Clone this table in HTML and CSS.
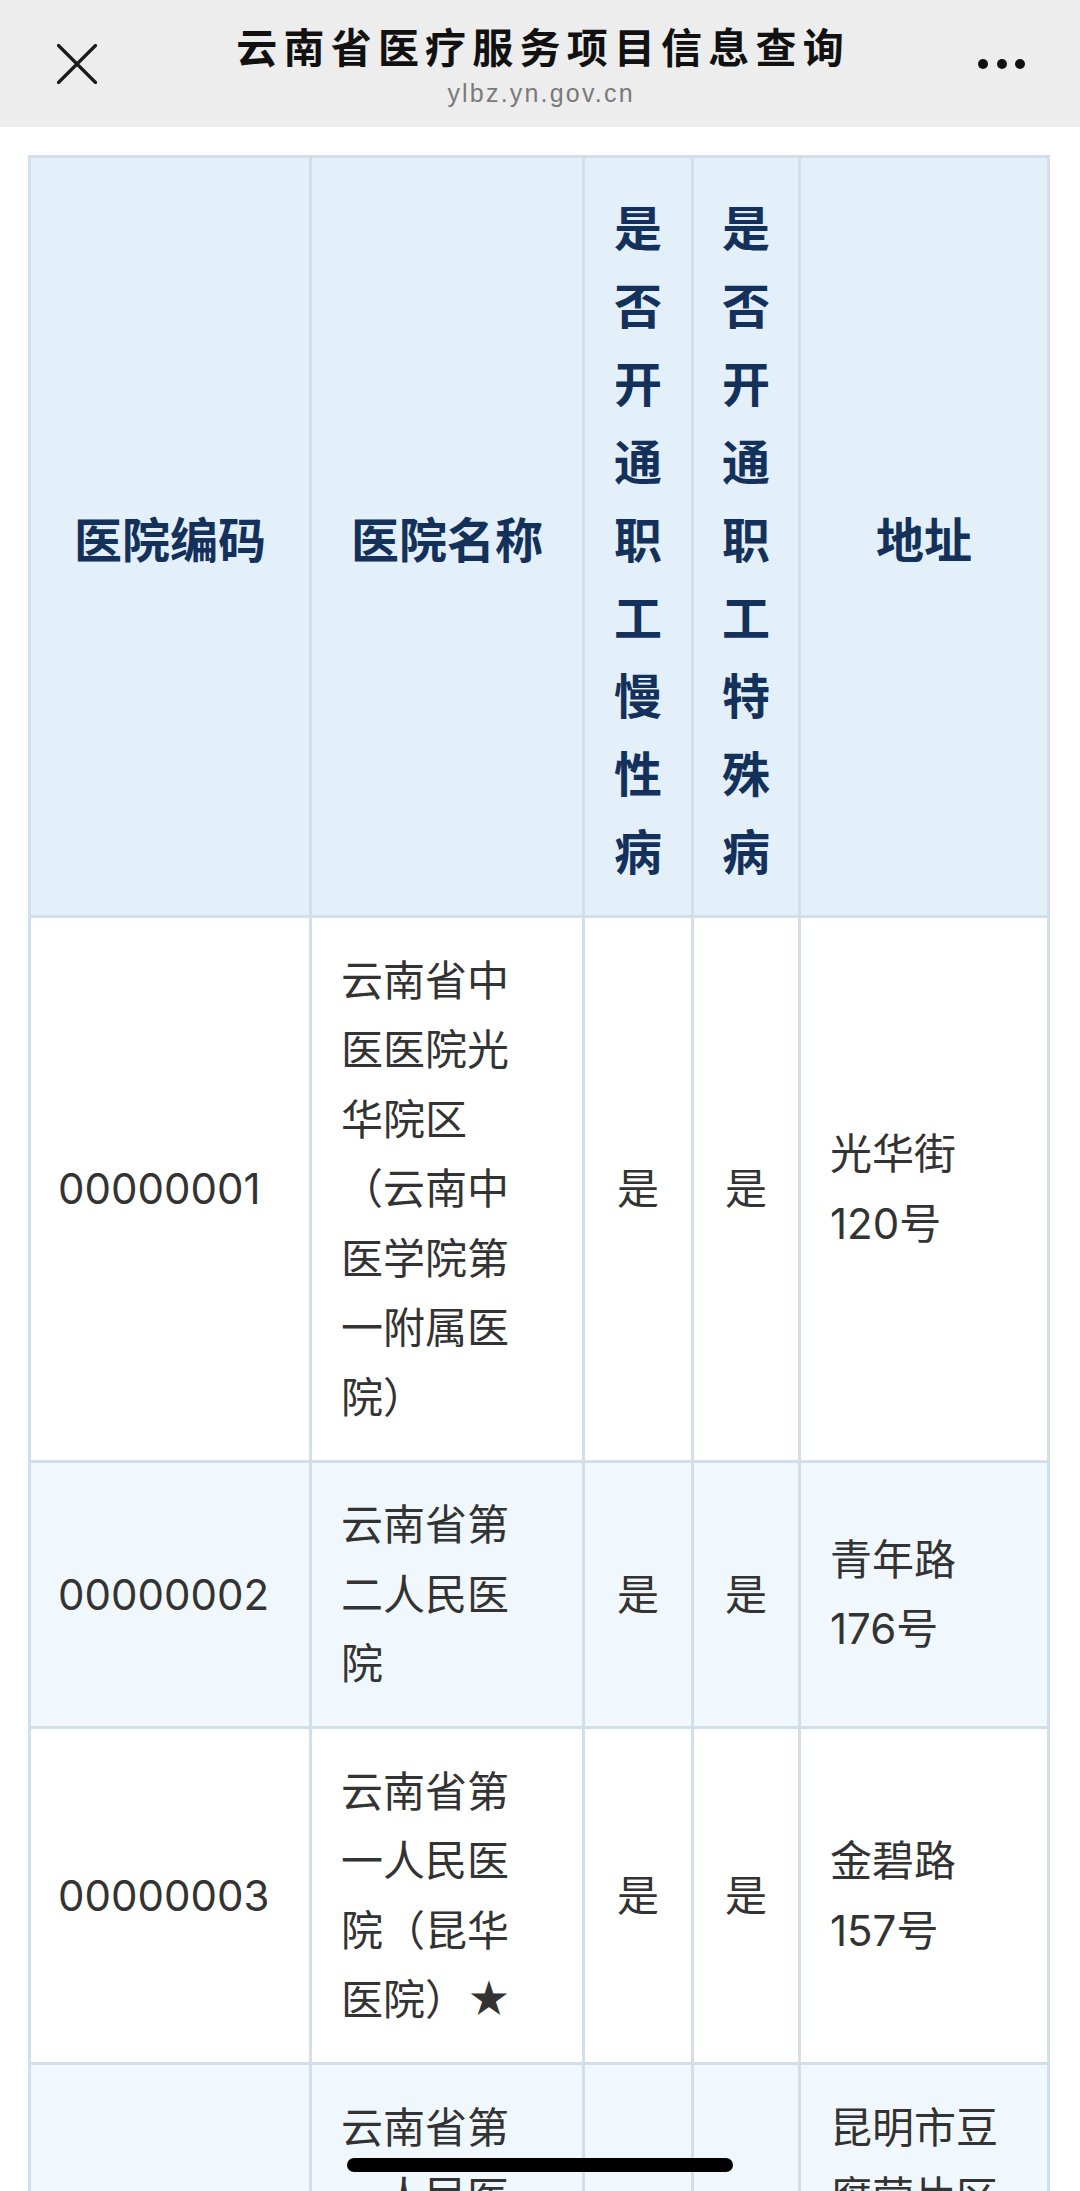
FILE: index.html
```html
<!DOCTYPE html>
<html lang="zh-CN">
<head>
<meta charset="utf-8">
<title>云南省医疗服务项目信息查询</title>
<link rel="stylesheet" href="styles.css">
</head>
<body>
<header class="topbar">
  <div class="topbar-left">
    <svg class="icon-close" width="40" height="40" viewBox="0 0 40 40" aria-hidden="true">
      <path d="M1.5 1.5L38.5 38.5M38.5 1.5L1.5 38.5" stroke="#1a1a1a" stroke-width="3.2" stroke-linecap="round" fill="none"/>
    </svg>
  </div>
  <div class="topbar-center">
    <div class="title">云南省医疗服务项目信息查询</div>
    <div class="url">ylbz.yn.gov.cn</div>
  </div>
  <div class="topbar-right">
    <span class="dot"></span><span class="dot"></span><span class="dot"></span>
  </div>
</header>

<main class="main">
  <table class="hosp-table">
    <colgroup>
      <col class="col-code">
      <col class="col-name">
      <col class="col-yn">
      <col class="col-yn2">
      <col class="col-addr">
    </colgroup>
    <thead>
      <tr>
        <th>医院编码</th>
        <th>医院名称</th>
        <th class="th-narrow">是否开通职工慢性病</th>
        <th class="th-narrow">是否开通职工特殊病</th>
        <th>地址</th>
      </tr>
    </thead>
    <tbody>
      <tr>
        <td class="td-code">00000001</td>
        <td class="td-name">云南省中医医院光华院区（云南中医学院第一附属医院）</td>
        <td class="td-yn">是</td>
        <td class="td-yn">是</td>
        <td class="td-addr">光华街120号</td>
      </tr>
      <tr>
        <td class="td-code">00000002</td>
        <td class="td-name">云南省第二人民医院</td>
        <td class="td-yn">是</td>
        <td class="td-yn">是</td>
        <td class="td-addr">青年路176号</td>
      </tr>
      <tr>
        <td class="td-code">00000003</td>
        <td class="td-name">云南省第一人民医院（昆华医院）★</td>
        <td class="td-yn">是</td>
        <td class="td-yn">是</td>
        <td class="td-addr">金碧路157号</td>
      </tr>
      <tr>
        <td class="td-code">00000004</td>
        <td class="td-name">云南省第一人民医院（新昆华医院）</td>
        <td class="td-yn">是</td>
        <td class="td-yn">是</td>
        <td class="td-addr">昆明市豆腐营片区新昆华医院院区</td>
      </tr>
    </tbody>
  </table>
</main>

<div class="home-indicator"></div>
</body>
</html>
```

FILE: styles.css
```css
html, body {
  margin: 0;
  padding: 0;
  background: #ffffff;
}

body {
  font-family: "Inter", "Noto Sans CJK SC", sans-serif;
  color: #333333;
}

/* ---------- top bar ---------- */
.topbar {
  display: grid;
  grid-template-columns: 1fr auto 1fr;
  height: 127px;
  background: #ededed;
  align-items: start;
}

.topbar-left {
  align-self: center;
  justify-self: start;
  padding-left: 57px;
  display: flex;
}

.icon-close {
  display: block;
}

.topbar-center {
  padding-top: 21px;
  text-align: center;
}

.title {
  font-family: "Noto Sans CJK SC", sans-serif;
  font-weight: 600;
  font-size: 41px;
  line-height: 48px;
  letter-spacing: 6.2px;
  padding-left: 6.2px;
  color: #111111;
  white-space: nowrap;
}

.url {
  margin-top: 9px;
  font-family: "Liberation Sans", Arial, sans-serif;
  font-size: 25px;
  line-height: 30px;
  letter-spacing: 2.2px;
  padding-left: 2.2px;
  color: #7a7a7a;
}

.topbar-right {
  align-self: center;
  justify-self: end;
  padding-right: 55px;
  display: flex;
  gap: 8.5px;
}

.dot {
  width: 10px;
  height: 10px;
  border-radius: 50%;
  background: #111111;
}

/* ---------- table ---------- */
.main {
  padding: 28px 30px 0 28px;
}

.hosp-table {
  width: 1022px;
  table-layout: fixed;
  border-collapse: separate;
  border-spacing: 0;
  border-top: 3px solid #d2dfeb;
  border-left: 3px solid #d2dfeb;
}

.col-code { width: 281px; }
.col-name { width: 273px; }
.col-yn   { width: 109px; }
.col-yn2  { width: 107px; }
.col-addr { width: 249px; }

.hosp-table th,
.hosp-table td {
  border-right: 3px solid #d2dfeb;
  border-bottom: 3px solid #d2dfeb;
  vertical-align: middle;
  text-spacing-trim: space-all;
}

.hosp-table th {
  background: #e3eff9;
  color: #13315a;
  font-family: "Noto Sans CJK SC", sans-serif;
  font-weight: 700;
  font-size: 48px;
  line-height: 78px;
  padding: 27.5px 20px;
  text-align: center;
}

.hosp-table td {
  font-size: 42px;
  line-height: 69.5px;
  padding: 27.5px 30px;
  color: #333333;
  text-align: left;
}

.hosp-table tbody tr:nth-child(even) td {
  background: #f1f8fd;
}

.hosp-table tbody tr:nth-child(odd) td {
  background: #ffffff;
}

.hosp-table td.td-code {
  padding-left: 27px;
  padding-right: 20px;
}

.hosp-table td.td-name {
  padding-left: 29px;
  padding-right: 36px;
}

.hosp-table td.td-yn {
  padding-left: 20px;
  padding-right: 20px;
  text-align: center;
}

.hosp-table td.td-addr {
  padding-left: 29px;
  padding-right: 30px;
}

/* ---------- home indicator overlay ---------- */
.home-indicator {
  position: fixed;
  left: 347px;
  bottom: 19px;
  width: 386px;
  height: 14px;
  border-radius: 7px;
  background: #000000;
}
```
